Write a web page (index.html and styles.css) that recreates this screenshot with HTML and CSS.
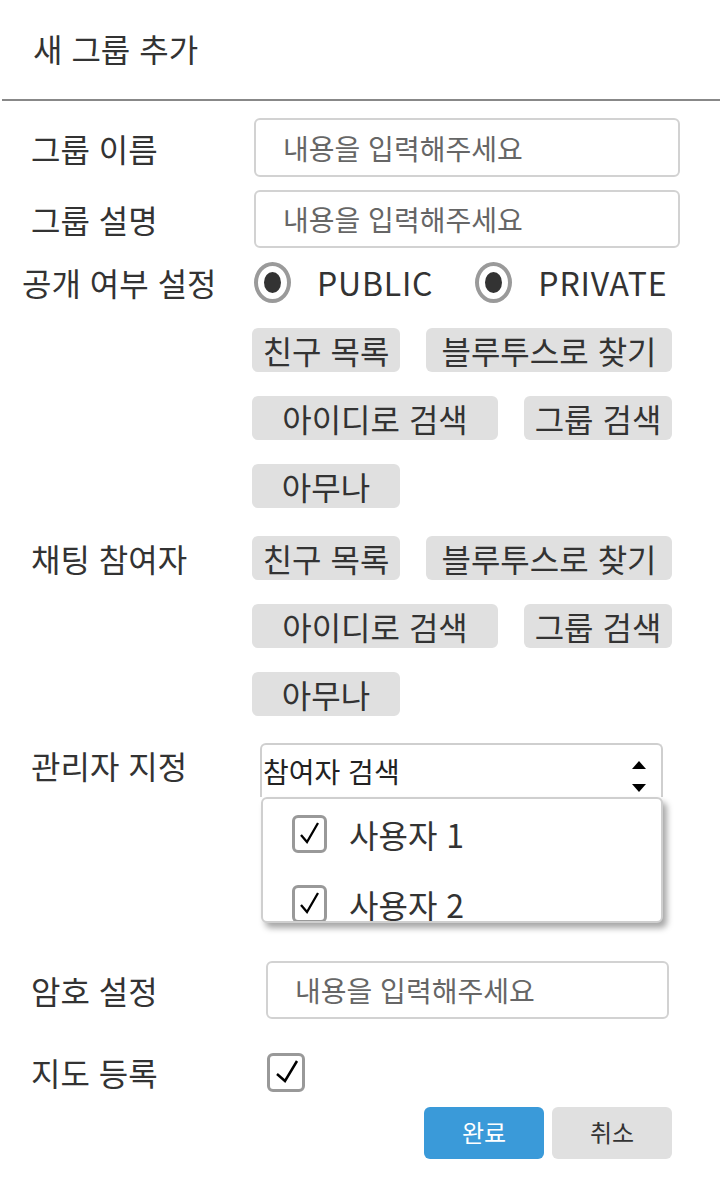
FILE: index.html
```html
<!DOCTYPE html>
<html lang="ko">
<head>
<meta charset="utf-8">
<title>새 그룹 추가</title>
<link rel="stylesheet" href="styles.css">
</head>
<body>
<div class="page">
  <header class="title-bar"><h1 class="title">새 그룹 추가</h1></header>
  <form class="form">
    <div class="row row-name">
      <span class="label">그룹 이름</span>
      <input class="text-input" type="text" placeholder="내용을 입력해주세요">
    </div>
    <div class="row row-desc">
      <span class="label">그룹 설명</span>
      <input class="text-input" type="text" placeholder="내용을 입력해주세요">
    </div>
    <div class="row row-radio">
      <span class="label label-wide">공개 여부 설정</span>
      <div class="radios">
        <span class="radio-item"><span class="radio"><span class="dot"></span></span><span class="radio-text">PUBLIC</span></span>
        <span class="radio-item radio-item-2"><span class="radio"><span class="dot"></span></span><span class="radio-text">PRIVATE</span></span>
      </div>
    </div>
    <div class="row row-chips row-chips-1">
      <span class="label"></span>
      <div class="chips">
        <span class="chip chip-s">친구 목록</span>
        <span class="chip chip-l">블루투스로 찾기</span>
        <span class="chip chip-l">아이디로 검색</span>
        <span class="chip chip-s">그룹 검색</span>
        <span class="chip chip-s">아무나</span>
      </div>
    </div>
    <div class="row row-chips row-chips-2">
      <span class="label">채팅 참여자</span>
      <div class="chips">
        <span class="chip chip-s">친구 목록</span>
        <span class="chip chip-l">블루투스로 찾기</span>
        <span class="chip chip-l">아이디로 검색</span>
        <span class="chip chip-s">그룹 검색</span>
        <span class="chip chip-s">아무나</span>
      </div>
    </div>
    <div class="row row-admin">
      <span class="label">관리자 지정</span>
      <div class="picker">
        <div class="select-box">
          <span class="select-text">참여자 검색</span>
          <svg class="select-arrows" width="16" height="32" viewBox="0 0 16 32"><path d="M1 9 L8 1 L15 9 Z" fill="#000"/><path d="M1 24 L15 24 L8 32 Z" fill="#000"/></svg>
        </div>
        <div class="dropdown">
          <div class="option">
            <span class="check check-sm"><svg width="29" height="32" viewBox="0 0 29 32"><path d="M6 17 L12 24 L23 5" fill="none" stroke="#000" stroke-width="2.3"/></svg></span>
            <span class="option-text">사용자 1</span>
          </div>
          <div class="option">
            <span class="check check-sm"><svg width="29" height="32" viewBox="0 0 29 32"><path d="M6 17 L12 24 L23 5" fill="none" stroke="#000" stroke-width="2.3"/></svg></span>
            <span class="option-text">사용자 2</span>
          </div>
        </div>
      </div>
    </div>
    <div class="row row-pass">
      <span class="label">암호 설정</span>
      <input class="text-input text-input-pass" type="password" placeholder="내용을 입력해주세요">
    </div>
    <div class="row row-map">
      <span class="label">지도 등록</span>
      <span class="check check-map"><svg width="32" height="33" viewBox="0 0 32 33"><path d="M7 18 L15 25 L27 5" fill="none" stroke="#000" stroke-width="2.5"/></svg></span>
    </div>
    <div class="actions">
      <button type="button" class="btn btn-primary">완료</button>
      <button type="button" class="btn btn-cancel">취소</button>
    </div>
  </form>
</div>
</body>
</html>
```
FILE: styles.css
```css
* { box-sizing: border-box; }
body {
  margin: 0;
  background: #fff;
  color: #333;
  font-family: "Noto Sans CJK KR", "Noto Sans", sans-serif;
}
.title-bar {
  height: 101px;
  margin-left: 2px;
  border-bottom: 2px solid #888;
  display: flex;
  align-items: center;
  padding-left: 31px;
}
.title {
  margin: 0 0 3px;
  font-size: 32px;
  font-weight: 400;
  color: #333;
}
.form {
  display: flex;
  flex-direction: column;
  padding-top: 17px;
}
.row {
  display: flex;
  align-items: center;
}
.label {
  width: 252px;
  flex-shrink: 0;
  padding-left: 31px;
  font-size: 32px;
  line-height: 44px;
  color: #333;
  white-space: nowrap;
}
.label-wide { padding-left: 22px; }
.text-input {
  width: 426px;
  height: 59px;
  margin-left: 2px;
  border: 2px solid #d2d2d2;
  border-radius: 6px;
  padding: 0 0 0 27px;
  font-family: "Noto Sans CJK KR", "Noto Sans", sans-serif;
  font-size: 28px;
  color: #333;
  background: #fff;
  outline: none;
}
.text-input::placeholder { color: #666; }
.row-desc { margin-top: 13px; }
.row-desc .text-input { height: 58px; }
.row-radio { margin-top: 14px; height: 44px; }
.row-radio .label { margin-top: -4px; }
.radios { display: flex; align-items: center; margin-left: 2px; margin-top: -4px; }
.radio-item { display: flex; align-items: center; gap: 26px; }
.radio-item-2 { margin-left: 42px; }
.radio {
  width: 37px;
  height: 41px;
  border: 4px solid #9a9a9a;
  border-radius: 50%;
  display: flex;
  align-items: center;
  justify-content: center;
}
.dot {
  width: 17px;
  height: 21px;
  border-radius: 50%;
  background: #333;
}
.radio-text {
  font-size: 32px;
  letter-spacing: 0.8px;
  color: #333;
}
.row-chips { align-items: flex-start; }
.row-chips-1 { margin-top: 22px; }
.row-chips-2 { margin-top: 28px; }
.chips {
  width: 420px;
  display: flex;
  flex-wrap: wrap;
  gap: 24px 26px;
}
.chip {
  height: 44px;
  border-radius: 6px;
  background: #e0e0e0;
  display: flex;
  align-items: center;
  justify-content: center;
  font-size: 32px;
  color: #333;
  white-space: nowrap;
}
.chip-s { width: 148px; }
.chip-l { width: 246px; }
.row-admin { margin-top: 27px; align-items: flex-start; }
.picker { width: 403px; margin-left: 8px; }
.select-box {
  height: 54px;
  border: 2px solid #cfcfcf;
  border-bottom: none;
  border-radius: 6px 6px 0 0;
  display: flex;
  align-items: center;
  justify-content: space-between;
  padding: 0 14px 0 1px;
}
.select-text { font-size: 28px; color: #222; }
.select-arrows { align-self: flex-start; margin-top: 15px; }
.dropdown {
  margin-left: 1px;
  height: 126px;
  border: 2px solid #cfcfcf;
  border-radius: 6px;
  background: #fff;
  overflow: hidden;
  box-shadow: 4px 5px 6px rgba(0, 0, 0, 0.35);
  padding: 16px 0 0 29px;
  display: flex;
  flex-direction: column;
  gap: 32px;
}
.option { display: flex; align-items: center; gap: 22px; flex-shrink: 0; height: 38px; }
.option-text { font-size: 32px; line-height: 38px; color: #333; }
.check {
  display: flex;
  align-items: center;
  justify-content: center;
  border: 3px solid #999;
  border-radius: 6px;
  background: #fff;
  flex-shrink: 0;
}
.check-sm { width: 35px; height: 38px; }
.check-map { width: 38px; height: 39px; margin-left: 15px; }
.row-pass { margin-top: 38px; }
.text-input-pass { width: 403px; height: 58px; margin-left: 14px; }
.row-map { margin-top: 31px; }
.actions {
  display: flex;
  justify-content: flex-end;
  gap: 8px;
  padding-right: 48px;
  margin-top: 13px;
}
.btn {
  width: 120px;
  height: 52px;
  border: none;
  border-radius: 6px;
  font-family: "Noto Sans CJK KR", "Noto Sans", sans-serif;
  font-size: 24px;
  padding: 0 0 4px;
}
.btn-primary { background: #3a9ad9; color: #fff; }
.btn-cancel { background: #e0e0e0; color: #333; }
```
